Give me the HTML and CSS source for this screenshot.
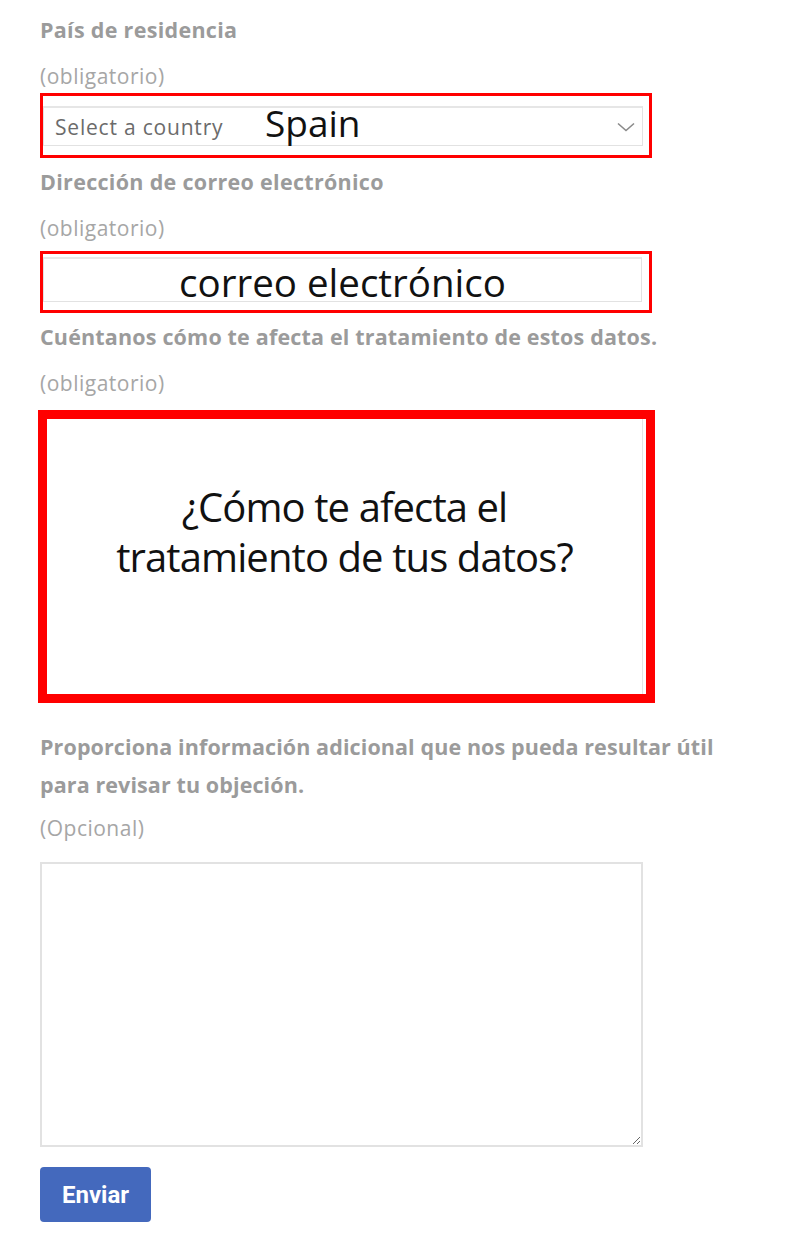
FILE: index.html
```html
<!DOCTYPE html>
<html lang="es">
<head>
<meta charset="utf-8">
<title>Formulario</title>
<link rel="stylesheet" href="styles.css">
</head>
<body>
<form class="form">
  <div class="field">
    <div class="label">País de residencia</div>
    <div class="hint">(obligatorio)</div>
    <div class="annot annot-select">
      <div class="select">
        <span class="select-text">Select a country</span>
        <span class="mark mark-spain">Spain</span>
        <svg class="chevron" width="18" height="10" viewBox="0 0 18 10"><path d="M1 1.5 L9 8.5 L17 1.5" fill="none" stroke="#8a8a8a" stroke-width="1.6"/></svg>
      </div>
    </div>
  </div>

  <div class="field field-2">
    <div class="label">Dirección de correo electrónico</div>
    <div class="hint">(obligatorio)</div>
    <div class="annot annot-email">
      <div class="input">
        <span class="mark">correo electrónico</span>
      </div>
    </div>
  </div>

  <div class="field field-3">
    <div class="label label-long">Cuéntanos cómo te afecta el tratamiento de estos datos.</div>
    <div class="hint">(obligatorio)</div>
    <div class="annot annot-big">
      <div class="area">
        <span class="mark mark-big">¿Cómo te afecta el<br>tratamiento de tus datos?</span>
      </div>
    </div>
  </div>

  <div class="field field-4">
    <div class="label label-narrow">Proporciona información adicional que nos pueda resultar útil<br>para revisar tu objeción.</div>
    <div class="hint hint-tight">(Opcional)</div>
    <textarea class="textarea"></textarea>
  </div>

  <button type="button" class="button">Enviar</button>
</form>
</body>
</html>
```

FILE: styles.css
```css
* { box-sizing: border-box; }

html, body {
  margin: 0;
  background: #ffffff;
}

body {
  padding: 11px 0 0 40px;
  font-family: "Open Sans", "Liberation Sans", sans-serif;
}

.form {
  display: flex;
  flex-direction: column;
  align-items: flex-start;
}

.field {
  display: flex;
  flex-direction: column;
  align-items: flex-start;
}

.field-2 { margin-top: 5px; }
.field-3 { margin-top: 5px; }
.field-4 { margin-top: 25px; }

.label {
  font-size: 21.5px;
  line-height: 38px;
  font-weight: 700;
  color: #9b9b9b;
  letter-spacing: 0.3px;
  white-space: nowrap;
}

.label-long {
  letter-spacing: 0.17px;
}

.label-narrow {
  letter-spacing: 0.1px;
}

.hint {
  margin-top: 10px;
  font-size: 21px;
  line-height: 34px;
  color: #a6a6a6;
  letter-spacing: 0.5px;
}

.hint-tight { margin-top: 7px; }

.annot {
  border: 3px solid #ff0000;
  width: 612px;
}

.annot-select {
  height: 65px;
  padding-top: 10px;
}

.annot-email {
  height: 62px;
  padding-top: 3px;
  margin-top: 6px;
}

.annot-big {
  border-width: 9px;
  width: 617px;
  height: 293px;
  margin-top: 10px;
  margin-left: -2px;
}

.select {
  position: relative;
  width: 600px;
  height: 40px;
  border: 1px solid #e2e2e2;
  border-top: 2px solid #e6e6e6;
  display: flex;
  align-items: center;
  padding-left: 11px;
}

.select-text {
  font-size: 21px;
  color: #6b6b6b;
  letter-spacing: 0.8px;
}

.mark {
  font-family: "Open Sans", "Liberation Sans", sans-serif;
  color: #111111;
  font-weight: 400;
  letter-spacing: 0;
}

.mark-spain {
  position: absolute;
  left: 221px;
  top: -7px;
  font-size: 37px;
  line-height: 44px;
}

.chevron {
  position: absolute;
  right: 7px;
  top: 14px;
}

.input {
  width: 599px;
  height: 45px;
  border: 1px solid #e2e2e2;
  border-top: 2px solid #e8e8e8;
  display: flex;
  justify-content: center;
  align-items: flex-end;
}

.input .mark {
  font-size: 38.5px;
  line-height: 44px;
  margin-bottom: -3px;
}

.area {
  width: 596px;
  height: 275px;
  border-right: 1px solid #e4e4e4;
  display: flex;
  justify-content: center;
  padding-top: 63px;
}

.mark-big {
  font-size: 40px;
  line-height: 50px;
  text-align: center;
  letter-spacing: -0.9px;
}

.textarea {
  margin-top: 17px;
  width: 603px;
  height: 285px;
  border: 2px solid #e2e2e2;
  border-radius: 0;
  resize: both;
  background: #ffffff;
  font-family: "Open Sans", sans-serif;
}

.button {
  margin-top: 20px;
  width: 111px;
  height: 55px;
  border: 0;
  border-radius: 4px;
  background: #4469bd;
  color: #ffffff;
  font-family: Roboto, "Liberation Sans", sans-serif;
  font-weight: 700;
  font-size: 24px;
  padding: 0;
}
```
